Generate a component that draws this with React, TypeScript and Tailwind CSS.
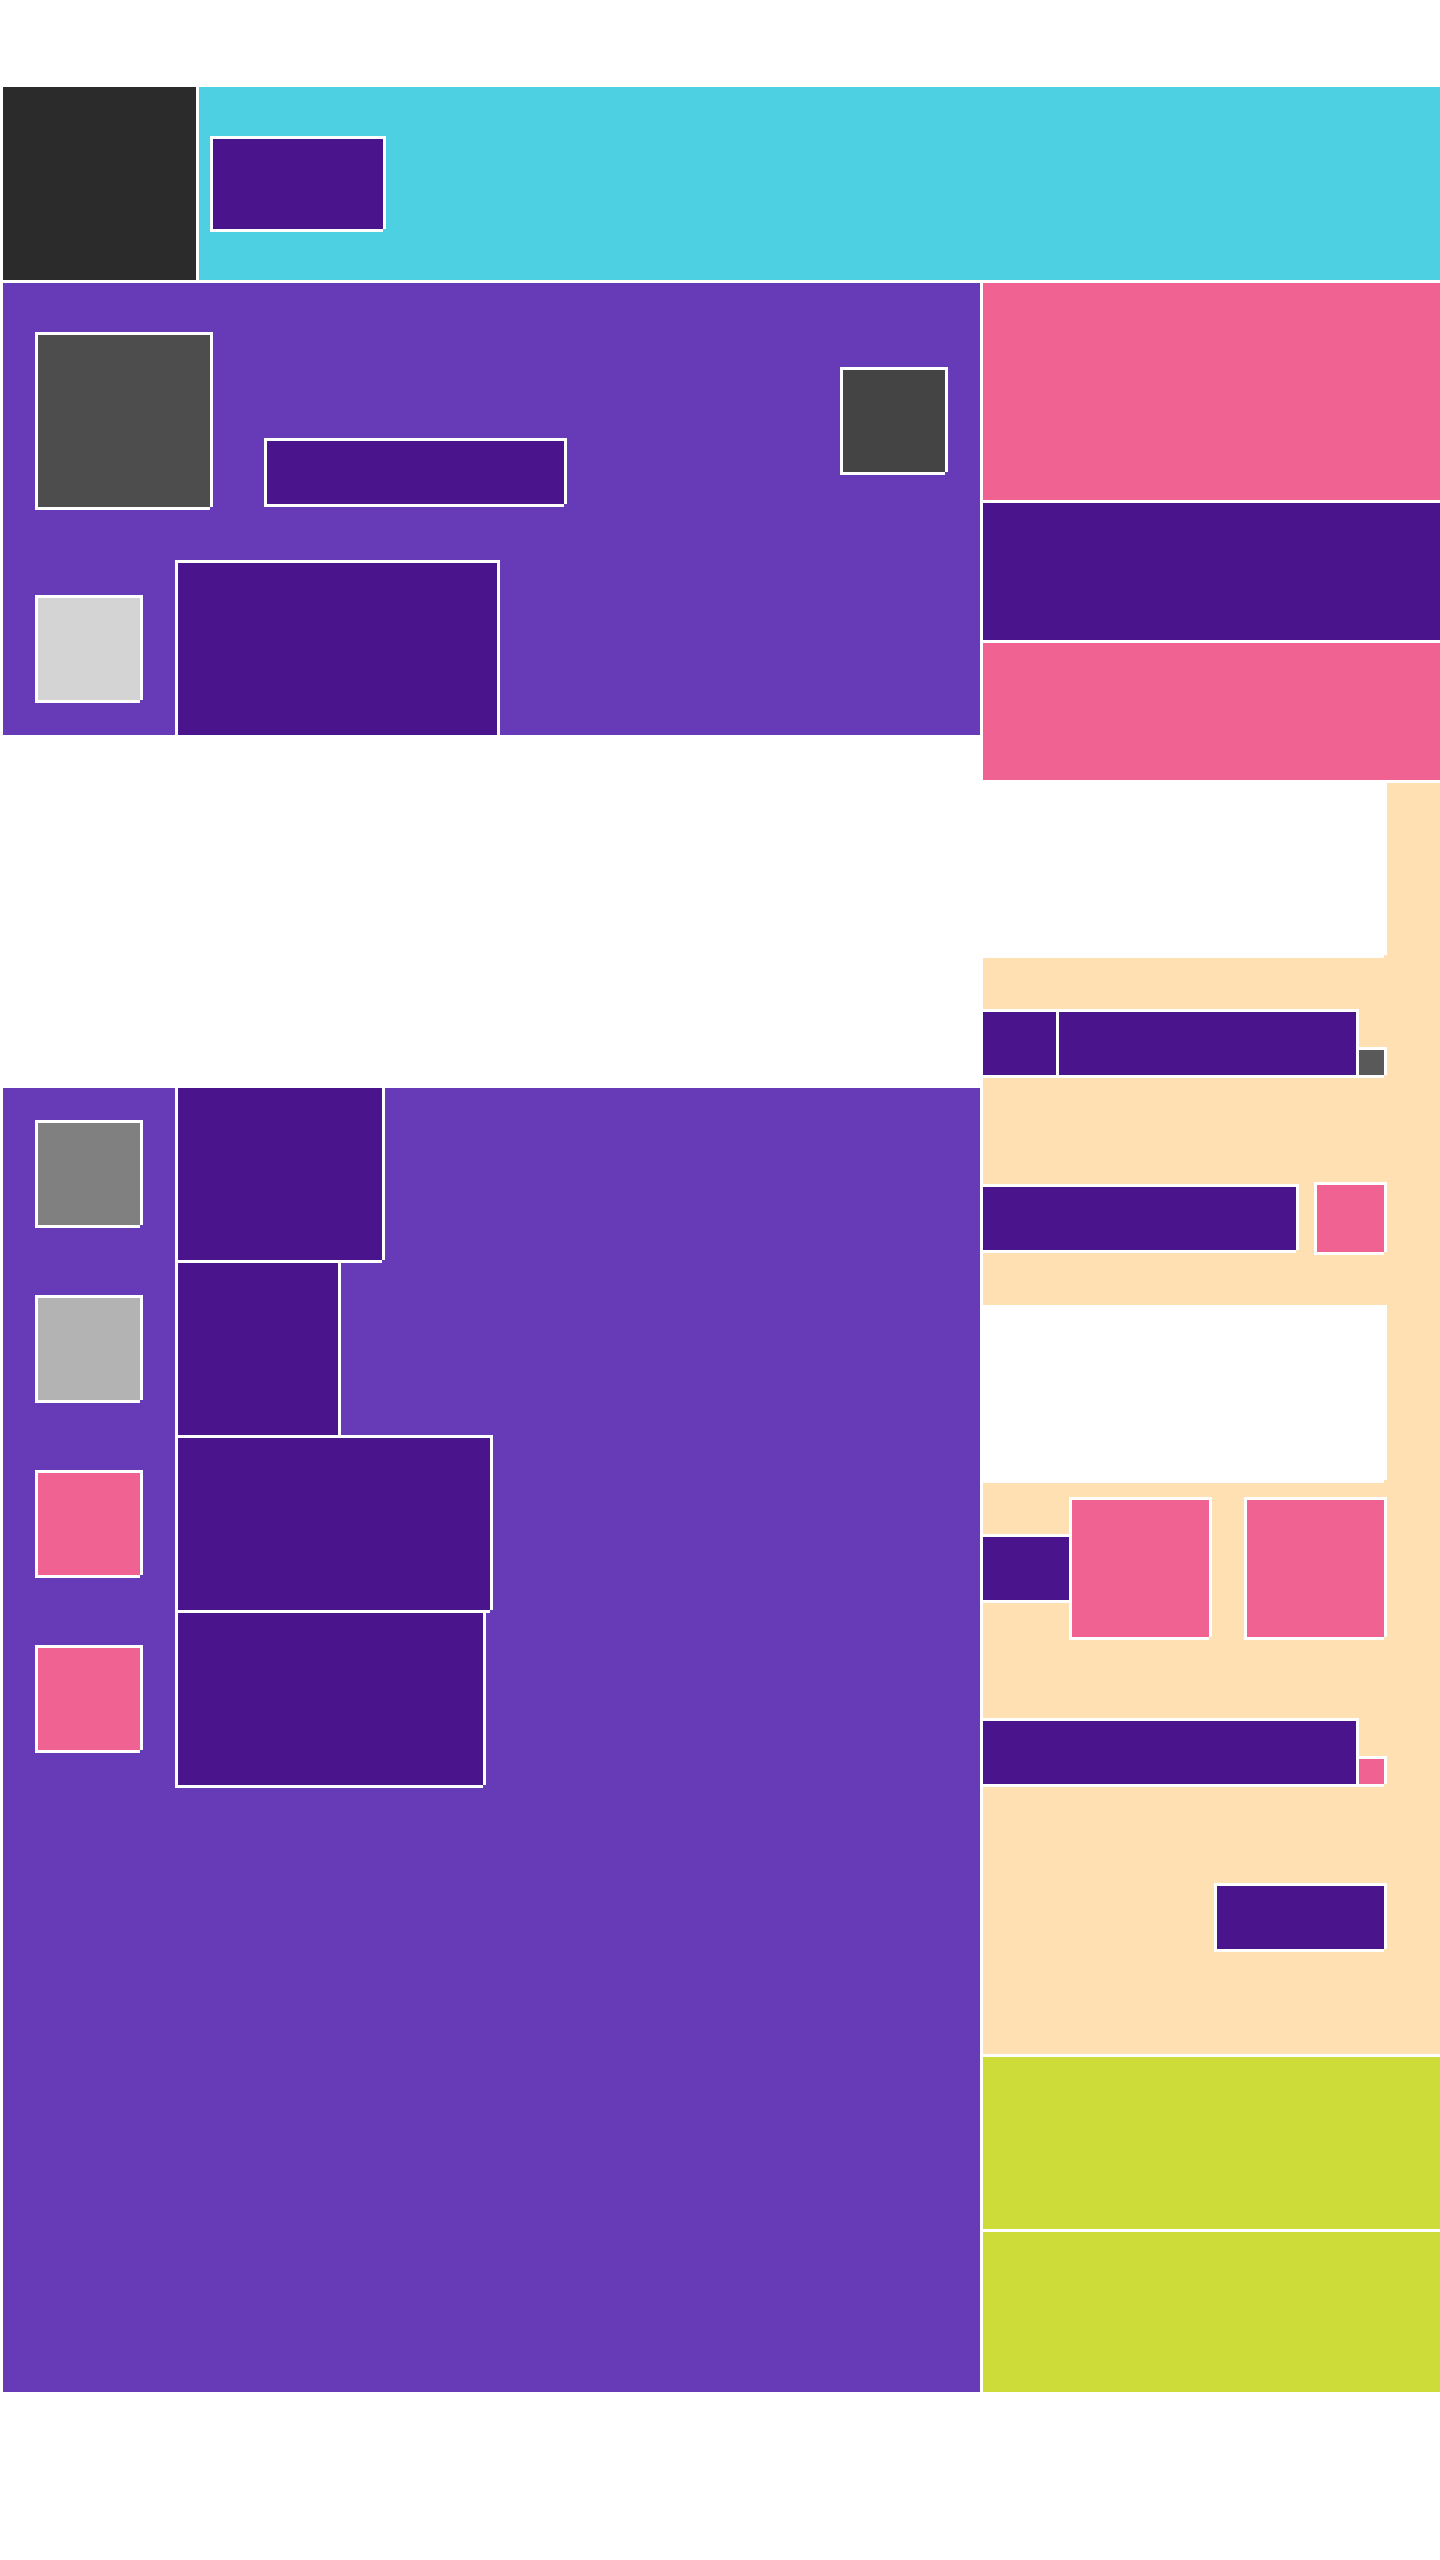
import React from "react";

const R =
  "shadow-[-3px_-3px_0_#fff,3px_-3px_0_#fff,-3px_3px_0_#fff,3px_0_0_#fff,0_3px_0_#fff]";

function Box({ className }: { className: string }) {
  return <div className={`${R} shrink-0 ${className}`} />;
}

function StackRow({ sq, w }: { sq: string; w: string }) {
  return (
    <div className="flex h-[172px] items-center">
      <Box className={`ml-[35px] h-[102px] w-[102px] ${sq}`} />
      <Box className={`ml-[38px] h-[172px] bg-[#4a148c] ${w}`} />
    </div>
  );
}

export default function App() {
  return (
    <div className="min-h-[2560px] bg-white pt-[87px] pl-[3px] font-['Liberation_Sans',sans-serif]">
      <div className="flex flex-col gap-[3px]">
        {/* header */}
        <div className="flex h-[193px] gap-[3px]">
          <div className="w-[193px] shrink-0 bg-[#2b2b2b]" />
          <div className="flex flex-1 items-center bg-[#4dd0e1]">
            <Box className="ml-[14px] h-[90px] w-[170px] bg-[#4a148c]" />
          </div>
        </div>

        {/* body */}
        <div className="flex gap-[3px]">
          {/* left column */}
          <div className="flex w-[977px] shrink-0 flex-col gap-[3px]">
            <div className="flex h-[452px] flex-col bg-[#673ab7]">
              <div className="flex h-[280px] items-start">
                <Box className="ml-[35px] mt-[52px] h-[172px] w-[172px] bg-[#4d4d4d]" />
                <Box className="ml-[57px] mt-[158px] h-[63px] w-[297px] bg-[#4a148c]" />
                <Box className="ml-auto mr-[35px] mt-[87px] h-[102px] w-[102px] bg-[#444444]" />
              </div>
              <StackRow sq="bg-[#d4d4d4]" w="w-[319px]" />
            </div>
            <div className="h-[347px] bg-white" />
            <div className="flex h-[1304px] flex-col gap-[3px] bg-[#673ab7]">
              <StackRow sq="bg-[#808080]" w="w-[204px]" />
              <StackRow sq="bg-[#b3b3b3]" w="w-[160px]" />
              <StackRow sq="bg-[#f06292]" w="w-[312px]" />
              <StackRow sq="bg-[#f06292]" w="w-[305px]" />
            </div>
          </div>

          {/* right column */}
          <div className="flex flex-1 flex-col gap-[3px]">
            <div className="h-[217px] bg-[#f06292]" />
            <div className="h-[137px] bg-[#4a148c]" />
            <div className="h-[137px] bg-[#f06292]" />
            <div className="h-[1271px] bg-[#ffe0b2]">
              <div className="flex w-[401px] flex-col">
                <Box className="h-[172px] w-[401px] bg-white" />
                <div className="mt-[57px] flex h-[63px] items-end gap-[3px]">
                  <Box className="h-[63px] w-[73px] bg-[#4a148c]" />
                  <Box className="h-[63px] w-[297px] bg-[#4a148c]" />
                  <Box className="h-[25px] w-[25px] bg-[#595959]" />
                </div>
                <div className="mt-[110px] flex h-[67px] items-center justify-between">
                  <Box className="h-[63px] w-[313px] bg-[#4a148c]" />
                  <Box className="h-[67px] w-[67px] bg-[#f06292]" />
                </div>
                <Box className="mt-[56px] h-[172px] w-[401px] bg-white" />
                <div className="mt-[20px] flex h-[137px] items-center">
                  <Box className="h-[63px] w-[86px] bg-[#4a148c]" />
                  <Box className="ml-[3px] h-[137px] w-[137px] bg-[#f06292]" />
                  <Box className="ml-[38px] h-[137px] w-[137px] bg-[#f06292]" />
                </div>
                <div className="mt-[84px] flex h-[63px] items-end gap-[3px]">
                  <Box className="h-[63px] w-[373px] bg-[#4a148c]" />
                  <Box className="h-[25px] w-[25px] bg-[#f06292]" />
                </div>
                <Box className="mt-[102px] h-[63px] w-[167px] self-end bg-[#4a148c]" />
              </div>
            </div>
            <div className="h-[172px] bg-[#cddc39]" />
            <div className="h-[160px] bg-[#cddc39]" />
          </div>
        </div>
      </div>
    </div>
  );
}
